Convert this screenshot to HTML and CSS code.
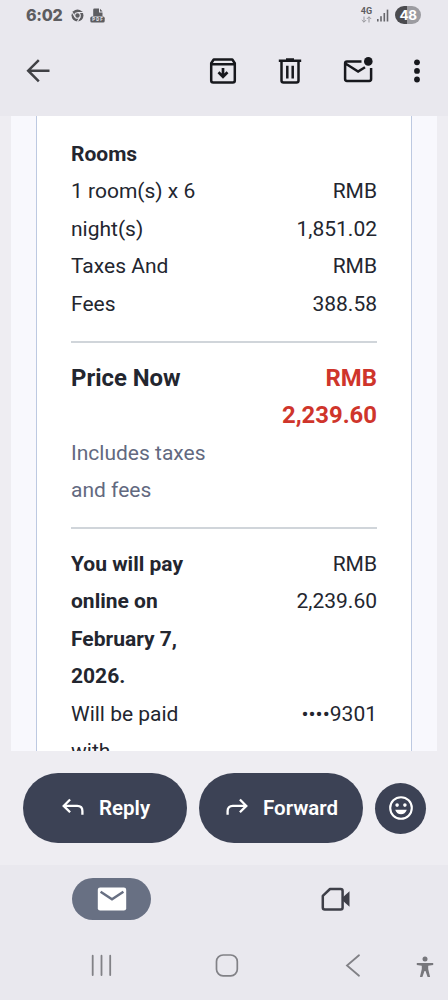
FILE: index.html
```html
<!DOCTYPE html>
<html lang="en">
<head>
<meta charset="utf-8">
<meta name="viewport" content="width=device-width, initial-scale=1">
<title>Mail</title>
<link rel="stylesheet" href="styles.css">
</head>
<body>
<div class="screen">
  <header class="status">
    <span class="clock">6:02</span>
    <svg class="chrome" width="13" height="13" viewBox="0 0 13 13"><circle cx="6.5" cy="6.5" r="6" fill="#5d5d61"/><circle cx="6.5" cy="6.5" r="2.8" fill="#5d5d61" stroke="#e9e8ee" stroke-width="1.1"/><path d="M6.5 3.5H12M3.9 8L1.2 3.2M9.1 8L6.3 12.6" stroke="#e9e8ee" stroke-width="1.1"/></svg>
    <svg class="pdf" width="15" height="15" viewBox="0 0 15 15"><path d="M3.2 8V1.7Q3.2.5 4.4.5H9v4h3.5V8z" fill="#5d5d61"/><path d="M10 .8v2.8h2.6z" fill="#5d5d61"/><rect x=".3" y="8.6" width="14.4" height="6" rx="1.6" fill="#5d5d61"/><text x="7.5" y="13.4" text-anchor="middle" textLength="10.5" class="pdf-label">PDF</text></svg>
    <div class="network">
      <span class="net-type">4G</span>
      <svg width="11" height="7" viewBox="0 0 11 7" fill="none" stroke="#99999e" stroke-width="1"><path d="M3 .5v5.7M.8 4L3 6.2 5.2 4M8 6.5V.8M5.8 3L8 .8 10.2 3"/></svg>
    </div>
    <svg class="signal" width="12" height="13" viewBox="0 0 12 13" fill="#66666b"><rect x="0" y="10" width="1.6" height="2.5"/><rect x="3.2" y="7.2" width="1.6" height="5.3"/><rect x="6.5" y="4" width="1.6" height="8.5"/><rect x="9.7" y=".6" width="1.6" height="11.9"/></svg>
    <span class="battery">48</span>
  </header>

  <nav class="toolbar">
    <svg class="back" width="26" height="26" viewBox="0 0 26 26" fill="none" stroke="#404145" stroke-width="2.5"><path d="M24.500 12.700H3.200M13.800 2.100L3.200 12.700l10.600 10.600"/></svg>
    <svg class="archive" width="28" height="28" viewBox="0 0 28 28" fill="none" stroke="#17181d" stroke-width="2.5"><path d="M2.200 6.200L4.700 2.500H23.300l2.500 3.700V23.400q0 2-2 2H4.200q-2 0-2-2zM2.200 7.200H25.800" stroke-linejoin="round"/><path d="M14 11v8.700M9.500 15.300L14 19.800l4.500-4.500" stroke-width="2.700"/></svg>
    <svg class="trash" width="26" height="28" viewBox="0 0 26 28" fill="none" stroke="#17181d" stroke-width="2.500"><path d="M1.800 3.700H24.200M9 2.400h8M4.500 4v19.400q0 2 2 2h13q2 0 2-2V4M10.300 8.800v12.800M15.700 8.800v12.800"/></svg>
    <svg class="unread" width="30" height="28" viewBox="0 0 30 28" fill="none" stroke="#17181d" stroke-width="2.500"><path d="M18.500 4.500H4q-1.900 0-1.900 1.900v15.700Q2.100 24 4 24h22.200q1.900 0 1.900-1.900V11M2.800 6.800L15.100 14.500 22 10.200"/><circle cx="25.300" cy="4.400" r="4.300" fill="#17181d" stroke="none"/></svg>
    <svg class="more" width="8" height="26" viewBox="0 0 8 26" fill="#17181d"><circle cx="4" cy="4.300" r="2.900"/><circle cx="4" cy="12.900" r="2.900"/><circle cx="4" cy="21.500" r="2.900"/></svg>
  </nav>

  <main class="message">
    <div class="mail-body">
      <div class="receipt">
        <section class="group">
          <div class="row"><div class="label strong">Rooms</div></div>
          <div class="row"><div class="label">1 room(s) x 6<br>night(s)</div><div class="value">RMB<br>1,851.02</div></div>
          <div class="row"><div class="label">Taxes And<br>Fees</div><div class="value">RMB<br>388.58</div></div>
        </section>
        <section class="group">
          <div class="row price"><div class="label now">Price Now</div><div class="value">RMB<br>2,239.60</div></div>
          <div class="row"><div class="label muted">Includes taxes<br>and fees</div></div>
        </section>
        <section class="group">
          <div class="row"><div class="label strong">You will pay<br>online on<br>February 7,<br>2026.</div><div class="value">RMB<br>2,239.60</div></div>
          <div class="row"><div class="label">Will be paid<br>with</div><div class="value">••••9301</div></div>
        </section>
      </div>
    </div>
  </main>

  <div class="actions">
    <div class="pill reply">
      <svg width="24" height="20" viewBox="0 0 24 20" fill="none" stroke="#fff" stroke-width="2.300"><path d="M9.100 1.500L2.700 7.900l6.400 6.400M3 7.900h13.200q5.200 0 5.200 5.200v3.600"/></svg>
      <span>Reply</span>
    </div>
    <div class="pill forward">
      <svg width="24" height="20" viewBox="0 0 24 20" fill="none" stroke="#fff" stroke-width="2.300"><path d="M14.900 1.500l6.400 6.400-6.400 6.400M21 7.900H7.800q-5.200 0-5.200 5.200v3.600"/></svg>
      <span>Forward</span>
    </div>
    <div class="react">
      <svg width="26" height="26" viewBox="0 0 26 26"><circle cx="13" cy="13" r="10.800" fill="none" stroke="#fff" stroke-width="2.100"/><circle cx="9.100" cy="10.100" r="1.800" fill="#fff"/><circle cx="16.900" cy="10.100" r="1.800" fill="#fff"/><path d="M7.200 14.700h11.600q-1.700 4.500-5.800 4.500t-5.800-4.500z" fill="#fff"/></svg>
    </div>
  </div>

  <footer class="bottom">
    <div class="tabs">
      <div class="tab active">
        <svg width="30" height="26" viewBox="0 0 30 26"><rect x=".8" y="1.500" width="28.400" height="23" rx="2.300" fill="#fff"/><path d="M3.600 5.800L15 13.200 26.400 5.800" fill="none" stroke="#687083" stroke-width="2.500"/></svg>
      </div>
      <div class="tab">
        <svg width="30" height="26" viewBox="0 0 30 26"><path d="M9 3h10.600q2 0 2 2v16.400q0 2-2 2H3.800q-2 0-2-2V9.800z" fill="none" stroke="#3e3f48" stroke-width="2.500" stroke-linejoin="round"/><path d="M21 12l7.500-6.800v15.600L21 14z" fill="#3e3f48"/></svg>
      </div>
    </div>
    <div class="system">
      <svg class="recents" width="22" height="24" viewBox="0 0 22 24" stroke="#818186" stroke-width="1.800" stroke-linecap="round"><path d="M2.700 2.700v19.300M11.500 2.700v19.300M20.200 2.700v19.300"/></svg>
      <svg class="home" width="24" height="24" viewBox="0 0 24 24"><rect x="1.500" y="2" width="20.800" height="20.800" rx="6.600" fill="none" stroke="#818186" stroke-width="1.700"/></svg>
      <svg class="prev" width="16" height="24" viewBox="0 0 16 24" fill="none" stroke="#818186" stroke-width="1.800" stroke-linecap="round"><path d="M14 2.300L2 12.500l12 10.200"/></svg>
      <svg class="access" width="18" height="22" viewBox="0 0 18 22" fill="#77777c"><circle cx="9" cy="2.900" r="2.500"/><path d="M.8 7.100h16.400v1.900l-5 .7v3.300l1.900 8.100h-2.500L9.500 15h-1L6.400 21.100H3.900l1.900-8.100V9.700l-5-.7z"/></svg>
    </div>
  </footer>
</div>
</body>
</html>
```
FILE: styles.css
```css
* { box-sizing: border-box; }
body { margin: 0; font-family: Roboto, "Liberation Sans", sans-serif; background: #e9e8ee; }
svg { display: block; flex: none; }
.screen { width: 448px; height: 1000px; display: flex; flex-direction: column; overflow: hidden; }

.status { height: 30px; flex: none; display: flex; align-items: center; padding: 0 27px 0 26px; color: #5d5d61; }
.clock { width: 36px; font: 800 16px/30px Inter, Roboto, sans-serif; letter-spacing: -0.3px; white-space: nowrap; }
.chrome { margin-left: 9px; }
.pdf { margin-left: 6px; }
.pdf-label { font: 700 4.5px Roboto, sans-serif; fill: #e9e8ee; }
.network { margin-left: auto; width: 11px; display: flex; flex-direction: column; align-items: center; gap: 1px; }
.net-type { font-size: 9px; line-height: 8px; font-weight: 700; }
.signal { margin-left: 5px; }
.battery { margin-left: 6px; width: 26px; height: 18px; border-radius: 9px; text-align: center; color: #fff; background: linear-gradient(90deg, #4b4b4f 48%, #9c9ca1 48%); font: 700 13.5px/18px Inter, Roboto, sans-serif; letter-spacing: -0.5px; }

.toolbar { height: 86px; flex: none; display: flex; align-items: center; padding: 0 27px 4px 25px; }
.archive { margin-left: 158px; }
.trash { margin-left: 40px; }
.unread { margin-left: 40px; }
.more { margin-left: auto; }

.message { height: 635px; flex: none; background: #eeedf2; padding: 0 11px; overflow: hidden; }
.mail-body { height: 635px; background: #f8f8fd; padding: 0 25px; }
.receipt { height: 635px; overflow: hidden; background: #fff; border: solid #bdc9e1; border-width: 0 1px; padding: 20px 34px 0; color: #23262f; font-size: 21px; line-height: 37.4px; }
.group + .group { margin-top: 18px; padding-top: 16.7px; border-top: 2px solid #d0d5da; }
.row { display: flex; justify-content: space-between; white-space: nowrap; }
.value { text-align: right; }
.strong { font-weight: 700; }
.muted { color: #626980; }
.price { font-size: 23.9px; font-weight: 700; }
.price .value { color: #cf352b; }

.actions { height: 114px; flex: none; background: #eeedf2; display: flex; align-items: center; padding: 0 22px 0 23px; }
.pill { height: 70px; border-radius: 35px; background: #3c4255; color: #fff; display: flex; align-items: center; font-size: 20.5px; font-weight: 600; }
.reply { width: 164px; padding-left: 38px; gap: 14px; }
.forward { width: 164px; margin-left: 12px; padding-left: 26px; gap: 14px; }
.react { width: 51px; height: 51px; border-radius: 50%; margin-left: 12px; background: #3c4255; display: flex; align-items: center; justify-content: center; }

.bottom { height: 135px; flex: none; background: #e9e8ee; padding-top: 13px; }
.tabs { display: flex; }
.tab { width: 224px; height: 42px; display: flex; align-items: center; justify-content: center; }
.tab.active { width: 79px; margin: 0 73px 0 72px; border-radius: 21px; background: #687083; }
.system { display: flex; align-items: center; height: 24px; margin-top: 33px; padding-left: 90px; }
.home { margin-left: 103px; }
.prev { margin-left: 106px; }
.access { margin: 3px 0 0 55px; }
```
